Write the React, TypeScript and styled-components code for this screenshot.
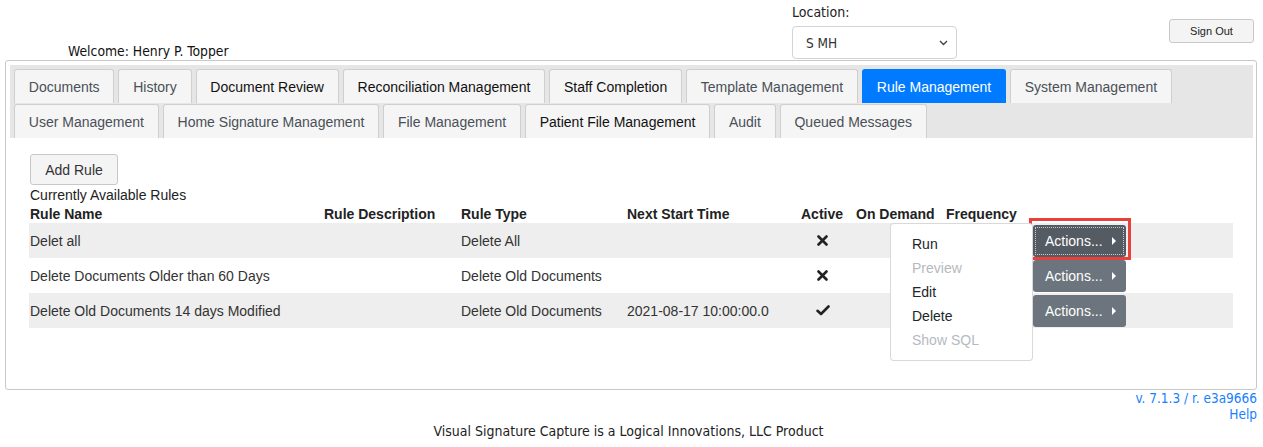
import React from 'react'
import styled, { createGlobalStyle } from 'styled-components'

const GlobalStyle = createGlobalStyle`
  body {
    margin: 0;
    background: #fff;
    font-family: "Liberation Sans", Arial, sans-serif;
    color: #212529;
  }
`

const tahoma = `"DejaVu Sans Condensed", "DejaVu Sans", Verdana, sans-serif`

type TabInfo = { label: string; dark?: boolean; active?: boolean }

const tabRows: TabInfo[] = [
  { label: 'Documents' },
  { label: 'History' },
  { label: 'Document Review', dark: true },
  { label: 'Reconciliation Management', dark: true },
  { label: 'Staff Completion', dark: true },
  { label: 'Template Management' },
  { label: 'Rule Management', active: true },
  { label: 'System Management' },
  { label: 'User Management' },
  { label: 'Home Signature Management' },
  { label: 'File Management' },
  { label: 'Patient File Management', dark: true },
  { label: 'Audit' },
  { label: 'Queued Messages' },
]

type Rule = { name: string; type: string; next: string; active: boolean }

const rules: Rule[] = [
  { name: 'Delet all', type: 'Delete All', next: '', active: false },
  { name: 'Delete Documents Older than 60 Days', type: 'Delete Old Documents', next: '', active: false },
  { name: 'Delete Old Documents 14 days Modified', type: 'Delete Old Documents', next: '2021-08-17 10:00:00.0', active: true },
]

const menuItems = [
  { label: 'Run' },
  { label: 'Preview', disabled: true },
  { label: 'Edit' },
  { label: 'Delete' },
  { label: 'Show SQL', disabled: true },
]

const Header = styled.header`
  display: flex;
  height: 60px;
  padding: 0 9px 0 68px;
`

const Welcome = styled.div`
  width: 724px;
  align-self: flex-end;
  font-family: ${tahoma};
  font-size: 13.8px;
  line-height: 16px;
  padding-bottom: 1px;
  color: #111;
`

const LocationBox = styled.div`
  width: 165px;
  padding-top: 4px;
`

const LocationLabel = styled.div`
  font-family: ${tahoma};
  font-size: 14px;
  line-height: 16px;
  color: #222;
  margin-bottom: 6px;
`

const Select = styled.div`
  height: 31px;
  border: 1px solid #ced4da;
  border-radius: 4px;
  display: flex;
  align-items: center;
  justify-content: space-between;
  padding: 0 8px 0 13px;
  font-family: ${tahoma};
  font-size: 13.5px;
  color: #333;
`

const SignOut = styled.button`
  margin: 19px 0 0 auto;
  width: 85px;
  height: 24px;
  background: #f4f4f4;
  border: 1px solid #c8c8c8;
  border-radius: 3px;
  font-family: "Liberation Sans", Arial, sans-serif;
  font-size: 11px;
  color: #222;
  padding: 0;
`

const Panel = styled.section`
  margin: 0 6px 0 5px;
  height: 330px;
  box-sizing: border-box;
  border: 1px solid #c8c8c8;
  border-radius: 3px;
  padding: 4px 3px 0 4px;
`

const TabBar = styled.nav`
  background: #e6e6e6;
  display: flex;
  flex-wrap: wrap;
  column-gap: 4px;
  row-gap: 1px;
  padding: 4px 4px 0;
`

const Tab = styled.div<{ $dark?: boolean; $active?: boolean }>`
  height: 34px;
  box-sizing: border-box;
  padding: 0 13.8px;
  display: flex;
  align-items: center;
  font-size: 14px;
  border: 1px solid ${(p) => (p.$active ? '#007bff' : '#cfcfcf')};
  border-bottom: none;
  border-radius: 3px 3px 0 0;
  background: ${(p) => (p.$active ? '#007bff' : '#f5f5f5')};
  color: ${(p) => (p.$active ? '#fff' : p.$dark ? '#111' : '#4a5057')};
`

const Content = styled.div`
  padding: 16px 0 0 20px;
`

const AddButton = styled.button`
  height: 31px;
  width: 88px;
  background: #f4f4f4;
  border: 1px solid #c8c8c8;
  border-radius: 3px;
  font-family: "Liberation Sans", Arial, sans-serif;
  font-size: 14px;
  color: #333;
  padding: 0;
`

const Caption = styled.div`
  font-size: 14px;
  line-height: 18px;
  color: #222;
  margin-top: 1px;
`

const Table = styled.div`
  width: 1204px;
  margin-left: -1px;
`

const cols = '294px 137px 166px 174px 55px 90px 88px 1fr'

const HeadRow = styled.div`
  display: grid;
  grid-template-columns: ${cols};
  height: 19px;
  align-items: center;
  font-size: 14px;
  font-weight: bold;
  color: #222;
`

const Row = styled.div<{ $shade: boolean }>`
  display: grid;
  grid-template-columns: ${cols};
  height: 35px;
  align-items: center;
  font-size: 14px;
  color: #333;
  background: ${(p) => (p.$shade ? '#eeeeee' : '#fff')};
`

const Cell = styled.div`
  padding-left: 1px;
  white-space: nowrap;
`

const IconCell = styled.div`
  width: 45px;
  display: flex;
  justify-content: center;
`

const ActionCell = styled.div`
  position: relative;
  align-self: stretch;
  display: flex;
  align-items: center;
`

const ActionsButton = styled.button<{ $focus?: boolean }>`
  position: relative;
  width: 93px;
  height: 32px;
  border: none;
  border-radius: 3px;
  background: ${(p) => (p.$focus ? '#545b62' : '#6c757d')};
  color: #fff;
  font-family: "Liberation Sans", Arial, sans-serif;
  font-size: 14px;
  display: flex;
  align-items: center;
  padding: 0 0 0 12px;
  gap: 9px;
  outline: ${(p) => (p.$focus ? '1px dotted #c9ccd0' : 'none')};
  outline-offset: -3px;
`

const Highlight = styled.div`
  position: absolute;
  left: -4px;
  top: -5px;
  width: 102px;
  height: 42px;
  box-sizing: border-box;
  border: 3px solid #e8413c;
  pointer-events: none;
`

const Menu = styled.div`
  position: absolute;
  right: 100%;
  top: 0;
  width: 143px;
  box-sizing: border-box;
  background: #fff;
  border: 1px solid rgba(0, 0, 0, 0.15);
  border-radius: 4px;
  padding: 8px 0;
  z-index: 5;
`

const MenuItem = styled.div<{ $disabled?: boolean }>`
  padding: 2px 21px;
  line-height: 20px;
  font-size: 14px;
  color: ${(p) => (p.$disabled ? '#b5bac0' : '#212529')};
`

const Footer = styled.footer`
  padding: 0 6px 0 0;
  font-family: ${tahoma};
`

const Version = styled.div`
  text-align: right;
  color: #1a7fff;
  font-size: 13.5px;
  line-height: 16px;
`

const Credit = styled.div`
  text-align: center;
  font-size: 14px;
  color: #222;
  line-height: 18px;
`

const Times = () => (
  <svg width="11" height="11" viewBox="0 0 11 11">
    <path d="M1.5 1.5 L9.5 9.5 M9.5 1.5 L1.5 9.5" stroke="#222" strokeWidth="2.6" strokeLinecap="round" />
  </svg>
)

const Check = () => (
  <svg width="14" height="11" viewBox="0 0 14 11">
    <path d="M1.5 5.8 L5 9 L12.5 1.5" stroke="#222" strokeWidth="2.6" fill="none" strokeLinecap="round" strokeLinejoin="round" />
  </svg>
)

const Caret = () => (
  <svg width="4" height="8" viewBox="0 0 4 8">
    <path d="M0 0 L4 4 L0 8 Z" fill="#fff" />
  </svg>
)

const Chevron = () => (
  <svg width="9" height="6" viewBox="0 0 9 6">
    <path d="M1 1 L4.5 4.5 L8 1" stroke="#444" strokeWidth="1.4" fill="none" />
  </svg>
)

export default function App() {
  return (
    <>
      <GlobalStyle />
      <Header>
        <Welcome>Welcome: Henry P. Topper</Welcome>
        <LocationBox>
          <LocationLabel>Location:</LocationLabel>
          <Select>
            <span>S MH</span>
            <Chevron />
          </Select>
        </LocationBox>
        <SignOut>Sign Out</SignOut>
      </Header>

      <Panel>
        <TabBar>
          {tabRows.map((t) => (
            <Tab key={t.label} $dark={t.dark} $active={t.active}>
              {t.label}
            </Tab>
          ))}
        </TabBar>

        <Content>
          <AddButton>Add Rule</AddButton>
          <Caption>Currently Available Rules</Caption>
          <Table>
            <HeadRow>
              <Cell>Rule Name</Cell>
              <Cell>Rule Description</Cell>
              <Cell>Rule Type</Cell>
              <Cell>Next Start Time</Cell>
              <Cell>Active</Cell>
              <Cell>On Demand</Cell>
              <Cell>Frequency</Cell>
              <Cell />
            </HeadRow>
            {rules.map((r, i) => (
              <Row key={r.name} $shade={i % 2 === 0}>
                <Cell>{r.name}</Cell>
                <Cell />
                <Cell>{r.type}</Cell>
                <Cell>{r.next}</Cell>
                <IconCell>{r.active ? <Check /> : <Times />}</IconCell>
                <Cell />
                <Cell />
                <ActionCell>
                  <ActionsButton $focus={i === 0}>
                    Actions...
                    <Caret />
                  </ActionsButton>
                  {i === 0 && (
                    <>
                      <Highlight />
                      <Menu>
                        {menuItems.map((m) => (
                          <MenuItem key={m.label} $disabled={m.disabled}>
                            {m.label}
                          </MenuItem>
                        ))}
                      </Menu>
                    </>
                  )}
                </ActionCell>
              </Row>
            ))}
          </Table>
        </Content>
      </Panel>

      <Footer>
        <Version>v. 7.1.3 / r. e3a9666</Version>
        <Version>Help</Version>
        <Credit>Visual Signature Capture is a Logical Innovations, LLC Product</Credit>
      </Footer>
    </>
  )
}
